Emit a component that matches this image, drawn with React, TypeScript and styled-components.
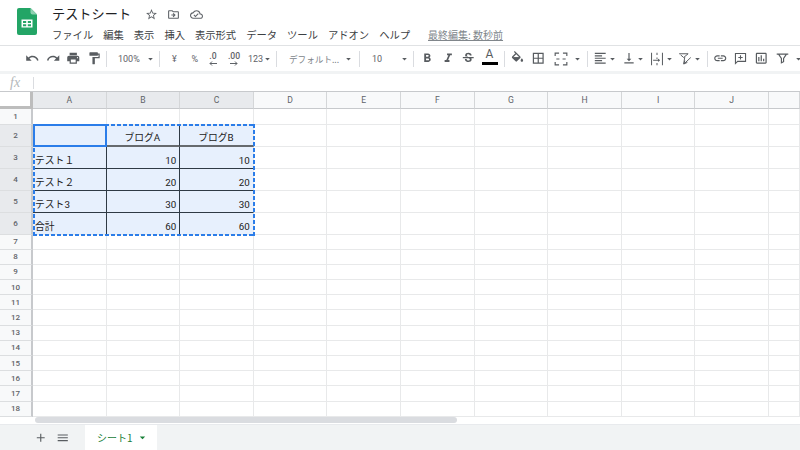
import React from "react";
import styled, { createGlobalStyle } from "styled-components";
import {
  MdUndo,
  MdRedo,
  MdPrint,
  MdFormatPaint,
  MdFormatBold,
  MdFormatItalic,
  MdStrikethroughS,
  MdBorderAll,
  MdFormatAlignLeft,
  MdVerticalAlignBottom,
  MdLink,
  MdOutlineInsertChart,
  MdOutlineStarBorder,
  MdOutlineDriveFileMove,
  MdOutlineCloudDone,
  MdAdd,
  MdMenu,
  MdArrowDropDown,
} from "react-icons/md";

const FONT = `"Noto Sans CJK JP", Roboto, "Liberation Sans", sans-serif`;
const UI_FONT = `Roboto, "Noto Sans CJK JP", "Liberation Sans", sans-serif`;
const GRAY = "#5f6368";
const ICON = "#585c60";
const BLUE = "#2b7de9";

const GlobalStyle = createGlobalStyle`
  html, body { margin: 0; padding: 0; background: #fff; }
  body { width: 800px; height: 450px; overflow: hidden; font-family: ${FONT}; }
`;

const Page = styled.div`
  width: 800px;
  height: 450px;
  display: flex;
  flex-direction: column;
  overflow: hidden;
`;

const Header = styled.header`
  height: 46px;
  flex: none;
  display: flex;
  padding-left: 17px;
  box-sizing: border-box;
  border-bottom: 1px solid #e0e2e4;
`;

const Logo = styled.svg`
  width: 20px;
  height: 27px;
  margin-top: 8px;
  margin-right: 15px;
  flex: none;
`;

const TitleColumn = styled.div`
  display: flex;
  flex-direction: column;
`;

const TitleRow = styled.div`
  display: flex;
  align-items: center;
  height: 20px;
  margin-top: 4px;
`;

const Title = styled.span`
  font-size: 13.2px;
  line-height: 20px;
  color: #202124;
  width: 88px;
`;

const TitleIcon = styled.span`
  width: 22.5px;
  display: flex;
  justify-content: center;
  font-size: 13px;
  color: ${GRAY};
`;

const MenuRow = styled.nav`
  display: flex;
  gap: 10px;
  margin-top: 3px;
  font-size: 10.3px;
  line-height: 16px;
  color: #3c4043;
`;

const LastEdit = styled.span`
  margin-left: 8px;
  font-size: 10px;
  color: #80868b;
  text-decoration: underline;
`;

const Toolbar = styled.div`
  height: 28px;
  flex: none;
  box-sizing: border-box;
  display: flex;
  align-items: center;
  padding-left: 22px;
  border-bottom: 3px solid #f1f3f4;
  font-family: ${UI_FONT};
`;

const Tool = styled.span<{ $w?: number; $ml?: number }>`
  width: ${(p) => p.$w ?? 20.5}px;
  margin-left: ${(p) => p.$ml ?? 0}px;
  height: 20px;
  flex: none;
  display: flex;
  align-items: center;
  justify-content: center;
  font-size: 14.5px;
  color: ${ICON};
`;

const Caret = styled(Tool).attrs({ $w: 11, $ml: -1 })`
  font-size: 12px;
`;

const TextTool = styled(Tool)<{ $pad?: number }>`
  justify-content: flex-start;
  padding-left: ${(p) => p.$pad ?? 0}px;
  box-sizing: border-box;
  font-size: 9px;
  color: ${GRAY};
  white-space: nowrap;
`;

const FontName = styled(TextTool)`
  font-family: ${FONT};
  font-size: 8.6px;
  color: #80868b;
`;

const Separator = styled.span<{ $l?: number; $r?: number }>`
  width: 1px;
  height: 16px;
  flex: none;
  background: #dadce0;
  margin: 0 ${(p) => p.$r ?? 3}px 0 ${(p) => p.$l ?? 3}px;
`;

const Decimal = styled(Tool)`
  flex-direction: column;
  font-size: 8.6px;
  line-height: 9px;
  color: ${GRAY};
  font-weight: 500;
`;

const ColorA = styled(Tool)`
  flex-direction: column;
  font-size: 12px;
  line-height: 13px;
  height: 22px;
  justify-content: flex-start;
`;

const ColorBar = styled.span`
  width: 16px;
  height: 3px;
  background: #000;
  margin-top: 1px;
`;

const FormulaBar = styled.div`
  height: 18px;
  flex: none;
  box-sizing: border-box;
  display: flex;
  align-items: center;
  border-bottom: 1px solid #c7c9cc;
`;

const Fx = styled.span`
  width: 34px;
  padding-left: 10px;
  box-sizing: border-box;
  font-family: "Liberation Serif", serif;
  font-style: italic;
  font-size: 14px;
  color: #b4b7ba;
  border-right: 1px solid #dadce0;
  height: 12px;
  line-height: 11px;
`;

const Sheet = styled.div`
  position: relative;
  flex: none;
  display: grid;
  grid-template-columns: 33px repeat(10, 73.6px) 31px;
  grid-template-rows: 16.5px 16px repeat(5, 22px) repeat(12, 15.2px);
  font-family: Roboto, "Noto Sans CJK JP", sans-serif;
  font-size: 9.8px;
  color: #222;
`;

const Corner = styled.div`
  box-sizing: border-box;
  background: #fff;
  border-right: 3px solid #bdbdbd;
  border-bottom: 3px solid #bdbdbd;
`;

const ColHead = styled.div<{ $on: boolean }>`
  box-sizing: border-box;
  display: flex;
  align-items: center;
  justify-content: center;
  font-family: ${UI_FONT};
  font-size: 8.6px;
  color: ${GRAY};
  background: ${(p) => (p.$on ? "#e8eaed" : "#f8f9fa")};
  border-right: 1px solid #d4d6d8;
  border-bottom: 1px solid #c7c9cc;
`;

const RowHead = styled.div<{ $on: boolean }>`
  box-sizing: border-box;
  display: flex;
  align-items: center;
  justify-content: center;
  font-family: ${UI_FONT};
  font-size: 8px;
  font-weight: 500;
  color: ${GRAY};
  background: ${(p) => (p.$on ? "#e8eaed" : "#f8f9fa")};
  border-right: 2px solid #c7c9cc;
  border-bottom: 1px solid #dcdee0;
`;

const Cell = styled.div<{ $sel?: boolean; $right?: boolean; $bottom?: "thin" | "thick"; $align?: string }>`
  box-sizing: border-box;
  display: flex;
  align-items: flex-end;
  justify-content: ${(p) => p.$align ?? "flex-start"};
  padding: 0 3px 0 2px;
  line-height: 14px;
  white-space: nowrap;
  background: ${(p) => (p.$sel ? "#e7f0fd" : "#fff")};
  border-right: 1px solid ${(p) => (p.$right ? "#2f3a45" : "#e8e9ea")};
  border-bottom: ${(p) =>
    p.$bottom === "thick" ? "2px solid #666a6e" : p.$bottom === "thin" ? "1px solid #2f3a45" : "1px solid #e8e9ea"};
`;

// marching-ants outline: 4px dash, 2px gap
const CopyRange = styled.div`
  position: absolute;
  grid-column: 2 / 5;
  grid-row: 3 / 8;
  inset: -1px -1px -1px 0;
  background:
    repeating-linear-gradient(90deg, ${BLUE} 0 4px, transparent 4px 6px) top left / 100% 2px no-repeat,
    repeating-linear-gradient(90deg, ${BLUE} 0 4px, transparent 4px 6px) bottom left / 100% 2px no-repeat,
    repeating-linear-gradient(0deg, ${BLUE} 0 4px, transparent 4px 6px) top left / 2px 100% no-repeat,
    repeating-linear-gradient(0deg, ${BLUE} 0 4px, transparent 4px 6px) top right / 2px 100% no-repeat;
`;

const ActiveCell = styled.div`
  position: absolute;
  grid-column: 2 / 3;
  grid-row: 3 / 4;
  inset: -1px 0 0 0;
  border: 2px solid ${BLUE};
`;

const ScrollArea = styled.div`
  flex: 1;
  display: flex;
  align-items: flex-end;
  padding-left: 35px;
`;

const ScrollThumb = styled.div`
  width: 422px;
  height: 6px;
  margin-bottom: 1px;
  background: #dadce0;
  border-radius: 3px;
`;

const TabBar = styled.div`
  height: 26px;
  flex: none;
  display: flex;
  align-items: stretch;
  background: #f1f3f4;
  border-top: 1px solid #e8eaed;
  box-sizing: border-box;
  padding-left: 30px;
`;

const TabIcon = styled.span`
  width: 22px;
  display: flex;
  align-items: center;
  justify-content: center;
  font-size: 13.5px;
  color: ${ICON};
`;

const Tab = styled.div`
  width: 72px;
  margin-left: 11px;
  box-sizing: border-box;
  padding-left: 12px;
  display: flex;
  align-items: center;
  background: #fff;
  color: #188038;
  font-size: 10px;
`;

const TabCaret = styled.span`
  margin-left: 3px;
  display: flex;
  font-size: 13px;
`;

const TABLE: Record<number, string[]> = {
  2: ["", "ブログA", "ブログB"],
  3: ["テスト１", "10", "10"],
  4: ["テスト２", "20", "20"],
  5: ["テスト3", "30", "30"],
  6: ["合計", "60", "60"],
};
const COLUMNS = ["A", "B", "C", "D", "E", "F", "G", "H", "I", "J", ""];
const ROWS = Array.from({ length: 18 }, (_, i) => i + 1);

const DropCaret = () => (
  <Caret>
    <MdArrowDropDown />
  </Caret>
);

function SheetsLogo() {
  return (
    <Logo viewBox="0 0 20 27">
      <path d="M2 0h11.5L20 6.5V25a2 2 0 0 1-2 2H2a2 2 0 0 1-2-2V2a2 2 0 0 1 2-2z" fill="#23a566" />
      <path d="M13.5 0L20 6.5h-4.5a2 2 0 0 1-2-2z" fill="#8ed1b1" />
      <path d="M4.5 11.5h11v8h-11z M6 13v2h3.2v-2z M10.8 13v2H14v-2z M6 16.2v2h3.2v-2z M10.8 16.2v2H14v-2z" fill="#fff" fillRule="evenodd" />
    </Logo>
  );
}

function FillIcon() {
  return (
    <svg width="15" height="15" viewBox="0 0 24 24" fill="currentColor">
      <path d="M16.56 8.94L7.62 0 6.21 1.41l2.38 2.38-5.15 5.15c-.59.59-.59 1.54 0 2.12l5.5 5.5c.29.29.68.44 1.06.44s.77-.15 1.06-.44l5.5-5.5c.59-.58.59-1.53 0-2.12zM5.21 10L10 5.21 14.79 10H5.21zM19 11.5s-2 2.17-2 3.5c0 1.1.9 2 2 2s2-.9 2-2c0-1.33-2-3.5-2-3.5z" />
      <path d="M5 10h10l-5 5z" />
    </svg>
  );
}

function MergeIcon() {
  return (
    <svg width="14" height="14" viewBox="0 0 18 18" fill="none" stroke="currentColor" strokeWidth="1.5">
      <path d="M1.5 5V1.5h5M11.5 1.500h5V5M1.500 13v3.500h5M11.500 16.500h5V13M3 9h4M11 9h4" />
    </svg>
  );
}

function WrapIcon() {
  return (
    <svg width="14" height="14" viewBox="0 0 18 18" fill="none" stroke="currentColor" strokeWidth="1.3">
      <path d="M2 1v16M16 1v16M9 1v3M9 7v2M9 14v3M4 10.500h8M10.500 9l1.500 1.500-1.500 1.500" />
    </svg>
  );
}

function RotateIcon() {
  return (
    <svg width="15" height="14" viewBox="0 0 20 18" fill="none" stroke="currentColor" strokeWidth="1.3">
      <path d="M1.500 2h12l-6 5-4-3.500M9 6.500L7.500 16M17 7l-9 8.500M12.500 13.500l-4.500 2 1-4.500" />
    </svg>
  );
}

function CommentIcon() {
  return (
    <svg width="13" height="13" viewBox="0 0 18 18" fill="none" stroke="currentColor" strokeWidth="1.5">
      <path d="M2 2h14v11H5l-3 3zM9 4.500v6M6 7.500h6" />
    </svg>
  );
}

function FilterIcon() {
  return (
    <svg width="13" height="13" viewBox="0 0 18 18" fill="none" stroke="currentColor" strokeWidth="1.6">
      <path d="M1 3h16M3.500 3l4 6v6l3-1.500V9l4-6" />
    </svg>
  );
}

function DecimalArrow({ left }: { left?: boolean }) {
  return (
    <svg width="10" height="5" viewBox="0 0 10 5" fill="none" stroke="currentColor" strokeWidth="1">
      {left ? <path d="M9 2.500H2M4 .5l-2 2 2 2" /> : <path d="M1 2.500h7M6 .5l2 2-2 2" />}
    </svg>
  );
}

export default function App() {
  return (
    <Page>
      <GlobalStyle />
      <Header>
        <SheetsLogo />
        <TitleColumn>
          <TitleRow>
            <Title>テストシート</Title>
            <TitleIcon><MdOutlineStarBorder /></TitleIcon>
            <TitleIcon><MdOutlineDriveFileMove /></TitleIcon>
            <TitleIcon><MdOutlineCloudDone /></TitleIcon>
          </TitleRow>
          <MenuRow>
            <span>ファイル</span>
            <span>編集</span>
            <span>表示</span>
            <span>挿入</span>
            <span>表示形式</span>
            <span>データ</span>
            <span>ツール</span>
            <span>アドオン</span>
            <span>ヘルプ</span>
            <LastEdit>最終編集: 数秒前</LastEdit>
          </MenuRow>
        </TitleColumn>
      </Header>

      <Toolbar>
        <Tool><MdUndo /></Tool>
        <Tool><MdRedo /></Tool>
        <Tool><MdPrint /></Tool>
        <Tool><MdFormatPaint /></Tool>
        <Separator $l={2} />
        <TextTool $w={36} $pad={8}>100%</TextTool>
        <DropCaret />
        <Separator />
        <TextTool $pad={9}>¥</TextTool>
        <TextTool $pad={8}>%</TextTool>
        <Decimal $w={18}>
          .0
          <DecimalArrow left />
        </Decimal>
        <Decimal $w={24}>
          .00
          <DecimalArrow />
        </Decimal>
        <TextTool $w={17} $pad={2}>123</TextTool>
        <DropCaret />
        <Separator />
        <FontName $w={64} $pad={9}>デフォルト...</FontName>
        <DropCaret />
        <Separator $l={5} />
        <TextTool $w={37} $pad={9}>10</TextTool>
        <DropCaret />
        <Separator />
        <Tool><MdFormatBold /></Tool>
        <Tool><MdFormatItalic /></Tool>
        <Tool><MdStrikethroughS /></Tool>
        <ColorA $w={22}>
          A
          <ColorBar />
        </ColorA>
        <Separator />
        <Tool $w={20}><FillIcon /></Tool>
        <Tool $w={22}><MdBorderAll /></Tool>
        <Tool $w={23}><MergeIcon /></Tool>
        <DropCaret />
        <Separator $l={4} $r={5.5} />
        <Tool $w={15}><MdFormatAlignLeft /></Tool>
        <DropCaret />
        <Tool $w={14} $ml={3.5}><MdVerticalAlignBottom /></Tool>
        <DropCaret />
        <Tool $w={17} $ml={2.5}><WrapIcon /></Tool>
        <DropCaret />
        <Tool $w={15} $ml={2.5}><RotateIcon /></Tool>
        <DropCaret />
        <Separator $l={4} $r={2} />
        <Tool><MdLink /></Tool>
        <Tool><CommentIcon /></Tool>
        <Tool><MdOutlineInsertChart /></Tool>
        <Tool $w={23}><FilterIcon /></Tool>
        <DropCaret />
      </Toolbar>

      <FormulaBar>
        <Fx>fx</Fx>
      </FormulaBar>

      <Sheet>
        <Corner />
        {COLUMNS.map((c, i) => (
          <ColHead key={i} $on={i < 3}>{c}</ColHead>
        ))}
        {ROWS.map((r) => (
          <React.Fragment key={r}>
            <RowHead $on={r >= 2 && r <= 6}>{r}</RowHead>
            {COLUMNS.map((_, c) => {
              const row = TABLE[r];
              if (!row || c > 2) return <Cell key={c} />;
              const text = row[c];
              return (
                <Cell
                  key={c}
                  $sel
                  $right={c < 2}
                  $bottom={r === 2 ? "thick" : r < 6 ? "thin" : undefined}
                  $align={c === 0 ? "flex-start" : r === 2 ? "center" : "flex-end"}
                >
                  {text}
                </Cell>
              );
            })}
          </React.Fragment>
        ))}
        <CopyRange />
        <ActiveCell />
      </Sheet>

      <ScrollArea>
        <ScrollThumb />
      </ScrollArea>

      <TabBar>
        <TabIcon><MdAdd /></TabIcon>
        <TabIcon><MdMenu /></TabIcon>
        <Tab>
          シート1
          <TabCaret><MdArrowDropDown /></TabCaret>
        </Tab>
      </TabBar>
    </Page>
  );
}
